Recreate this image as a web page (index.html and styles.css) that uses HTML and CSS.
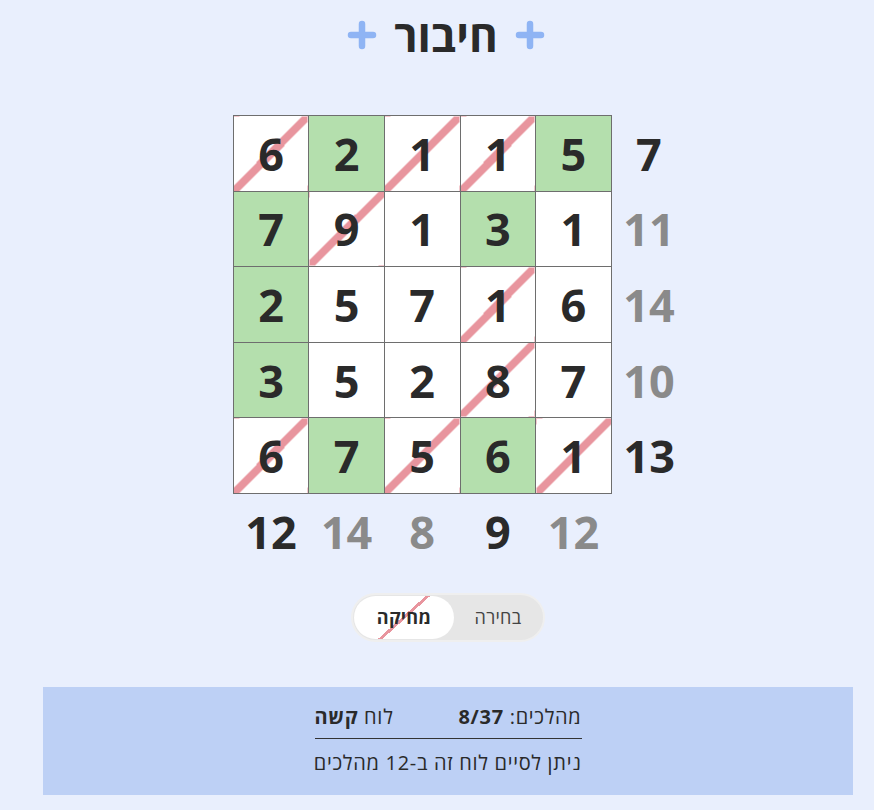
FILE: index.html
```html
<!DOCTYPE html>
<html lang="he" dir="rtl">
<head>
    <meta charset="UTF-8">
    <meta name="viewport" content="width=device-width, initial-scale=1.0">
    <title>חיבור</title>
    <link rel="stylesheet" href="styles.css">
</head>
<body>
    <div class="page">
        <!-- כותרת -->
        <h1 class="title">
            <svg class="plus" viewBox="0 0 30 30"><path d="M15 4V26M4 15H26"/></svg>
            <span>חיבור</span>
            <svg class="plus" viewBox="0 0 30 30"><path d="M15 4V26M4 15H26"/></svg>
        </h1>

        <!-- לוח המשחק -->
        <div class="board-wrap">
            <table class="board" dir="ltr">
                <tbody>
                    <tr>
                        <td class="cell crossed">6</td>
                        <td class="cell kept">2</td>
                        <td class="cell crossed">1</td>
                        <td class="cell crossed">1</td>
                        <td class="cell kept">5</td>
                        <td class="sum done">7</td>
                    </tr>
                    <tr>
                        <td class="cell kept">7</td>
                        <td class="cell crossed">9</td>
                        <td class="cell">1</td>
                        <td class="cell kept">3</td>
                        <td class="cell">1</td>
                        <td class="sum">11</td>
                    </tr>
                    <tr>
                        <td class="cell kept">2</td>
                        <td class="cell">5</td>
                        <td class="cell">7</td>
                        <td class="cell crossed">1</td>
                        <td class="cell">6</td>
                        <td class="sum">14</td>
                    </tr>
                    <tr>
                        <td class="cell kept">3</td>
                        <td class="cell">5</td>
                        <td class="cell">2</td>
                        <td class="cell crossed">8</td>
                        <td class="cell">7</td>
                        <td class="sum">10</td>
                    </tr>
                    <tr>
                        <td class="cell crossed">6</td>
                        <td class="cell kept">7</td>
                        <td class="cell crossed">5</td>
                        <td class="cell kept">6</td>
                        <td class="cell crossed">1</td>
                        <td class="sum done">13</td>
                    </tr>
                    <tr>
                        <td class="sum done">12</td>
                        <td class="sum">14</td>
                        <td class="sum">8</td>
                        <td class="sum done">9</td>
                        <td class="sum">12</td>
                        <td class="sum"></td>
                    </tr>
                </tbody>
            </table>
        </div>

        <!-- מצב: בחירה / מחיקה -->
        <div class="mode">
            <div class="toggle">
                <button type="button" class="option">בחירה</button>
                <button type="button" class="option active">מחיקה</button>
            </div>
        </div>

        <!-- מידע -->
        <div class="info">
            <div class="info-inner">
                <div class="info-row">
                    <span>מהלכים: <strong>8/37</strong></span>
                    <span>לוח <strong>קשה</strong></span>
                </div>
                <div class="info-note">ניתן לסיים לוח זה ב-12 מהלכים</div>
            </div>
        </div>
    </div>
</body>
</html>
```

FILE: styles.css
```css
body {
    font-family: "Open Sans", "Noto Sans", "DejaVu Sans", sans-serif;
    background-color: #e9effd;
    color: #2a2a2a;
    margin: 0;
}

.page {
    padding: 0 21px 0 43px;
}

/* כותרת */
.title {
    display: flex;
    justify-content: center;
    align-items: center;
    gap: 17px;
    margin: 0;
    padding-top: 12px;
    padding-right: 4px;
    height: 46px;
    font-size: 44px;
    font-weight: 700;
    line-height: 46px;
}

.plus {
    width: 30px;
    height: 30px;
}

.plus path {
    fill: none;
    stroke: #8fb4f4;
    stroke-width: 6.5;
    stroke-linecap: round;
}

/* לוח */
.board-wrap {
    display: flex;
    justify-content: center;
    padding-top: 57px;
    padding-left: 24px;
}

.board {
    border-collapse: collapse;
    table-layout: fixed;
}

.board td {
    width: 74.6px;
    height: 74.6px;
    padding: 0;
    text-align: center;
    vertical-align: middle;
    font-size: 45px;
    font-weight: 700;
    line-height: 1;
}

.cell {
    background-color: #fff;
    border: 1px solid #6e6e6e;
}

.cell.kept {
    background-color: #b4dfad;
}

.cell.crossed {
    background: linear-gradient(to bottom right,
        transparent calc(50% - 4px),
        #e8959e calc(50% - 4px),
        #e8959e calc(50% + 4px),
        transparent calc(50% + 4px)), #fff;
}

.sum {
    color: #8a8a8a;
}

.sum.done {
    color: #2a2a2a;
}

/* מתג */
.mode {
    display: flex;
    justify-content: center;
    padding-top: 24px;
}

.toggle {
    display: flex;
    align-items: center;
    height: 49px;
    box-sizing: border-box;
    background-color: #e6e6e6;
    border: 2px solid #efefef;
    border-radius: 26px;
    padding: 1px;
}

.option {
    font-family: inherit;
    font-size: 18px;
    letter-spacing: 0.3px;
    color: #444;
    background: none;
    border: none;
    height: 43px;
    padding: 0;
    width: 88px;
    border-radius: 22px;
    cursor: pointer;
}

.option.active {
    width: 100px;
    font-weight: 700;
    color: #2a2a2a;
    background: linear-gradient(138deg,
        transparent calc(50% - 1.5px),
        #e8959e calc(50% - 1.5px),
        #e8959e calc(50% + 1.5px),
        transparent calc(50% + 1.5px)), #fff;
}

/* מידע */
.info {
    margin-top: 45px;
    background-color: #bdd0f5;
    padding: 15px 0 17px;
    font-size: 20px;
    letter-spacing: 0.7px;
}

.info-inner {
    width: 267px;
    margin: 0 auto;
}

.info-row {
    display: flex;
    justify-content: space-between;
    padding-bottom: 6px;
    border-bottom: 1px solid #333;
    line-height: 30px;
}

.info-note {
    line-height: 30px;
    padding-top: 9px;
    white-space: nowrap;
}
```
